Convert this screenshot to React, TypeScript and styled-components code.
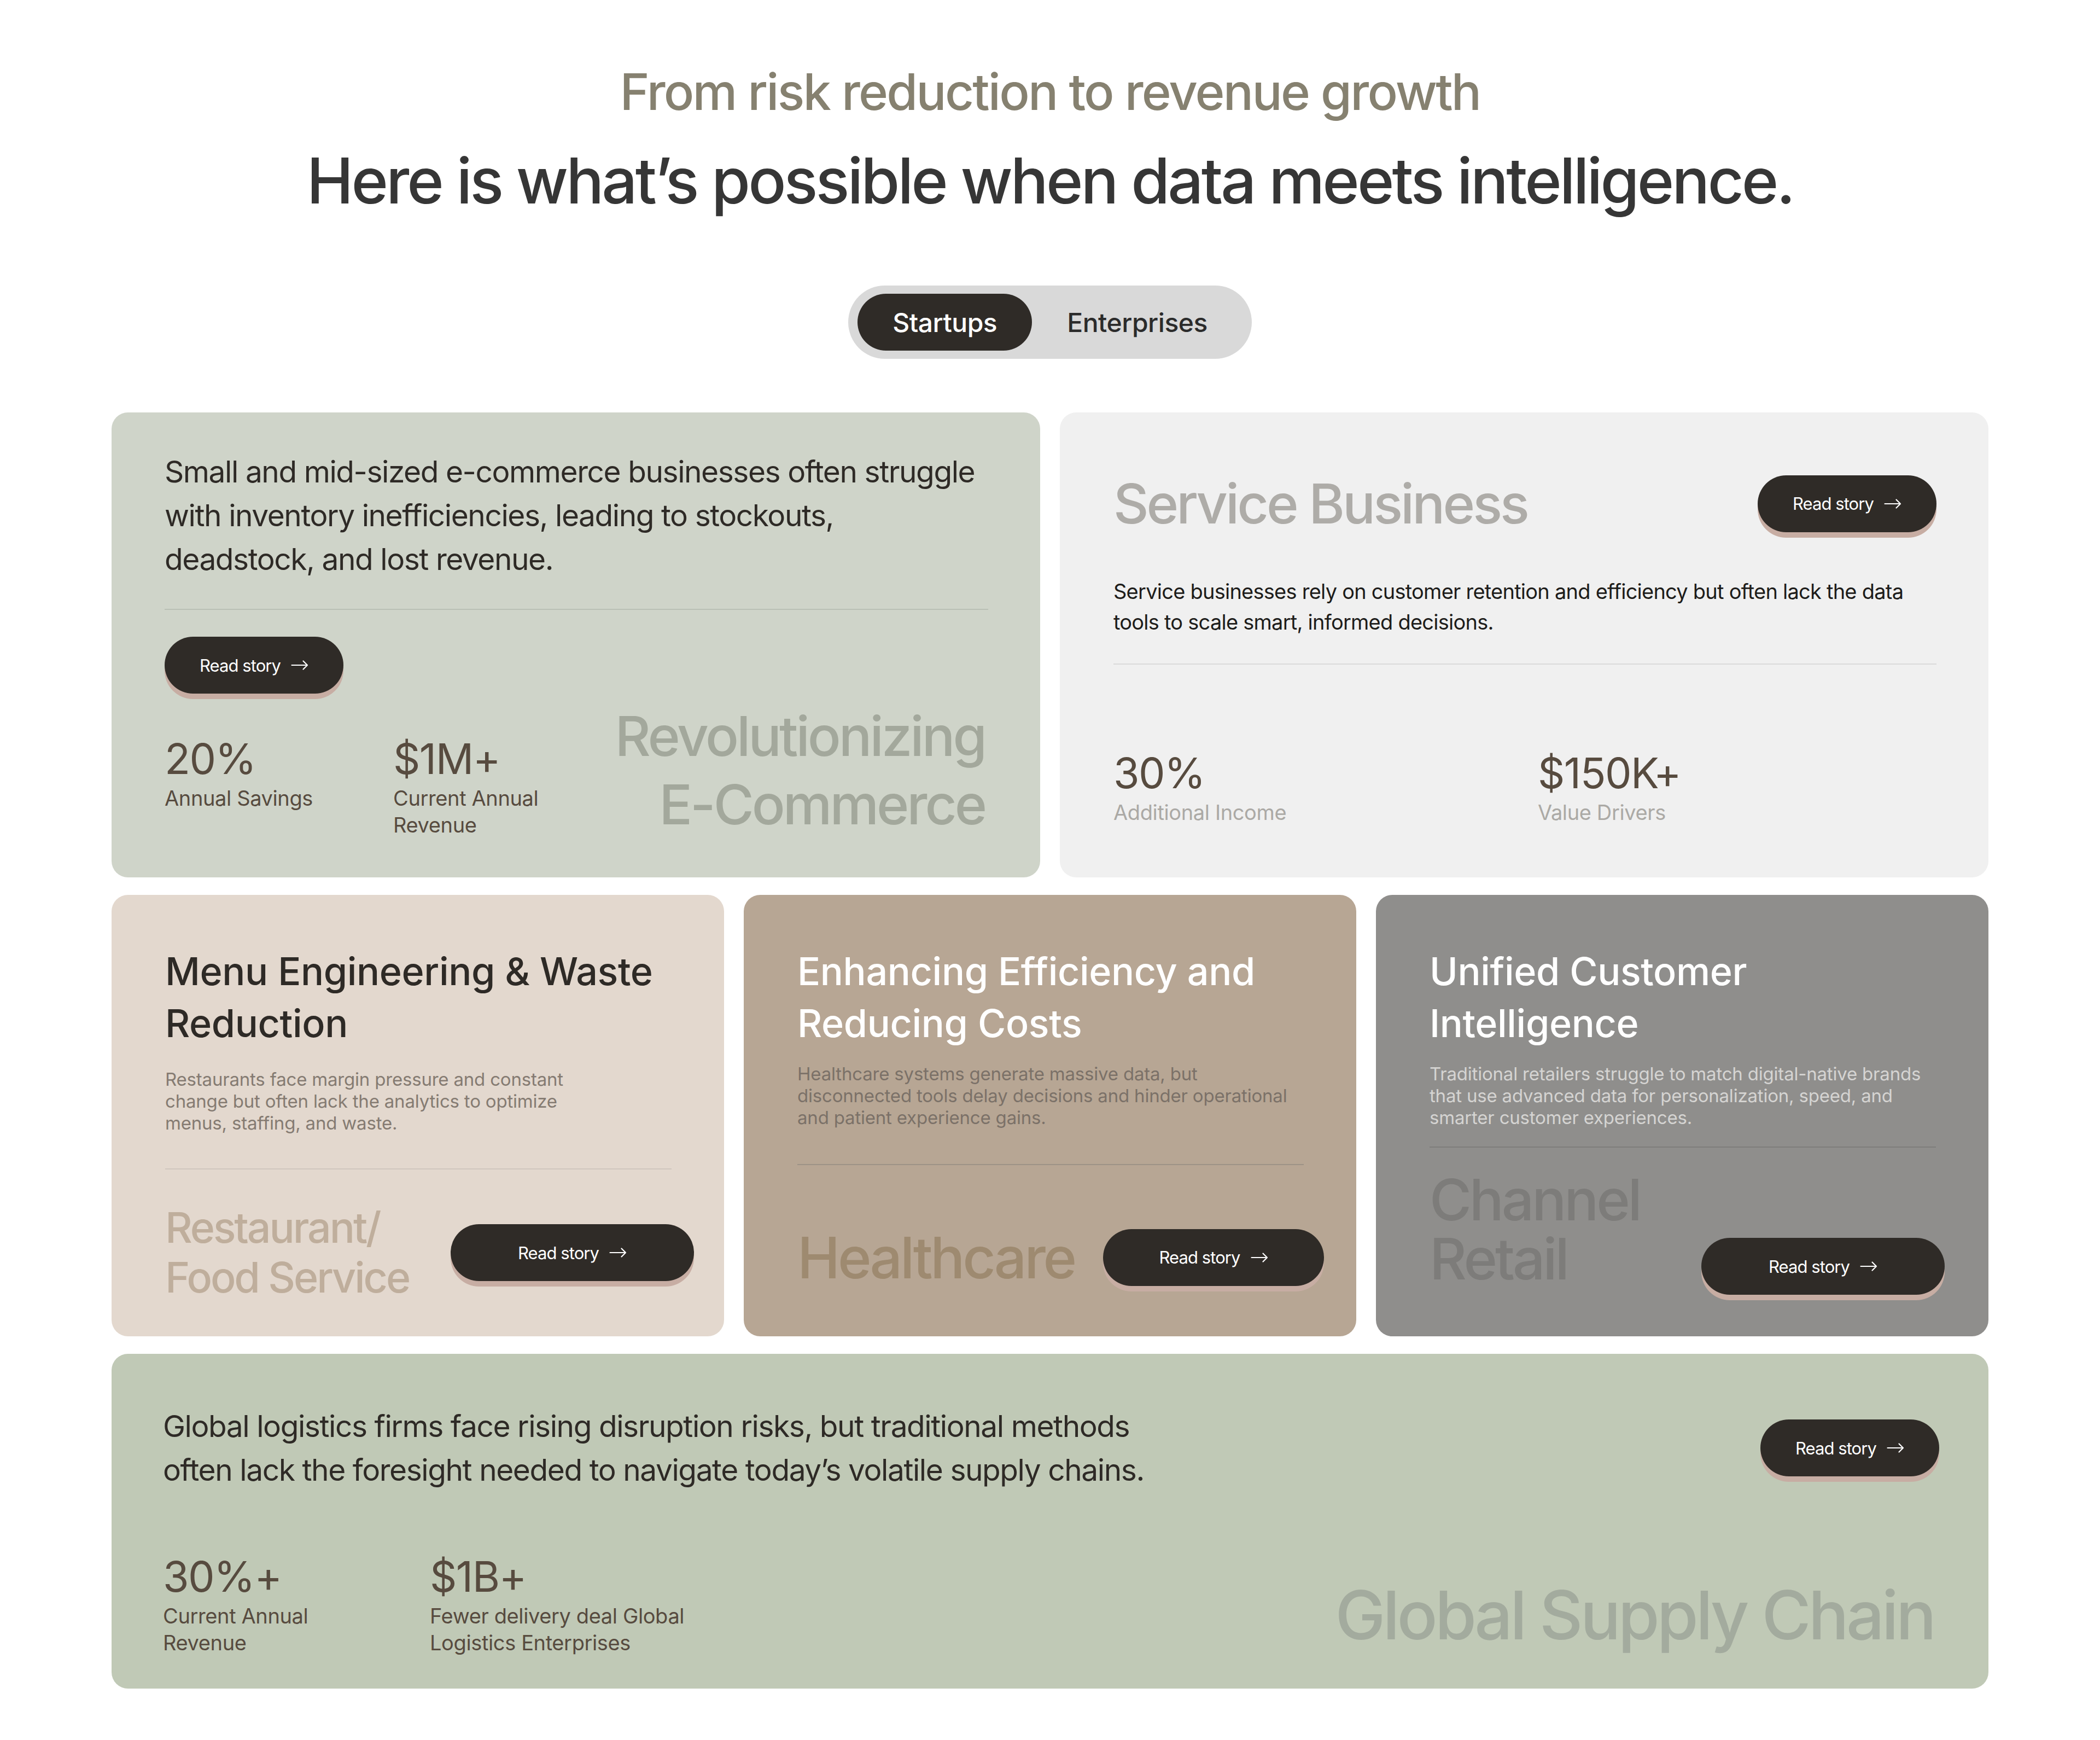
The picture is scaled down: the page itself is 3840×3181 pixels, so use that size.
import React from "react";
import styled, { createGlobalStyle } from "styled-components";

const GlobalStyle = createGlobalStyle`
  html, body { margin: 0; padding: 0; background: #ffffff; }
  body {
    font-family: Inter, "Noto Sans", "Liberation Sans", sans-serif;
    -webkit-font-smoothing: antialiased;
  }
  * { box-sizing: border-box; }
`;

const Page = styled.main`
  width: 3840px;
  padding: 113px 0 95px;
  display: flex;
  flex-direction: column;
  align-items: center;
`;

const Header = styled.header`
  display: flex;
  flex-direction: column;
  align-items: center;
  text-align: center;
`;

const Eyebrow = styled.h2`
  margin: 0;
  font-size: 92px;
  line-height: 110px;
  font-weight: 500;
  letter-spacing: -0.03em;
  color: #868170;
`;

const Headline = styled.h1`
  margin: 38px 0 0;
  font-size: 115px;
  line-height: 140px;
  font-weight: 500;
  letter-spacing: -0.035em;
  color: #363636;
`;

const TabBar = styled.div`
  margin-top: 121px;
  display: inline-flex;
  padding: 15px 17px;
  background: #d9d9d9;
  border-radius: 999px;
`;

const Tab = styled.button<{ $active?: boolean }>`
  height: 104px;
  padding: 0 64px;
  border: 0;
  border-radius: 52px;
  font-family: inherit;
  font-size: 48px;
  font-weight: 500;
  letter-spacing: -0.01em;
  background: ${(p) => (p.$active ? "#2f2b27" : "transparent")};
  color: ${(p) => (p.$active ? "#ffffff" : "#2b2b2b")};
  cursor: pointer;
`;

const Board = styled.section`
  margin-top: 98px;
  width: 3432px;
  display: flex;
  flex-direction: column;
  gap: 32px;
`;

const Row = styled.div<{ $cols: number }>`
  display: grid;
  grid-template-columns: repeat(${(p) => p.$cols}, minmax(0, 1fr));
  column-gap: 36px;
`;

const Card = styled.article<{ $bg: string; $pad: string }>`
  background: ${(p) => p.$bg};
  border-radius: 30px;
  padding: ${(p) => p.$pad};
  display: flex;
  flex-direction: column;
  min-width: 0;
`;

const Lead = styled.p`
  margin: 0;
  font-size: 55px;
  line-height: 80px;
  font-weight: 400;
  letter-spacing: -0.026em;
  color: #2e2a26;
  white-space: nowrap;
`;

const Body = styled.p<{ $size: number; $lh: number; $color: string; $mt: number; $ls?: number }>`
  margin: ${(p) => p.$mt}px 0 0;
  font-size: ${(p) => p.$size}px;
  line-height: ${(p) => p.$lh}px;
  color: ${(p) => p.$color};
  letter-spacing: ${(p) => p.$ls ?? -0.012}em;
  white-space: nowrap;
`;

const CardTitle = styled.h3<{ $color: string }>`
  margin: 0;
  font-size: 70px;
  line-height: 95px;
  font-weight: 500;
  letter-spacing: -0.005em;
  color: ${(p) => p.$color};
  white-space: nowrap;
`;

const DisplayTitle = styled.h3<{ $color: string }>`
  margin: 0;
  font-size: 100px;
  line-height: 127px;
  font-weight: 500;
  letter-spacing: -0.04em;
  color: ${(p) => p.$color};
  white-space: nowrap;
`;

const Rule = styled.hr<{ $color: string; $mt: number }>`
  border: 0;
  height: 2px;
  width: 100%;
  margin: ${(p) => p.$mt}px 0 0;
  background: ${(p) => p.$color};
  flex-shrink: 0;
`;

const SplitRow = styled.div<{ $mt?: number | "auto"; $align?: string; $bleed?: number }>`
  display: flex;
  justify-content: space-between;
  align-items: ${(p) => p.$align || "center"};
  margin-top: ${(p) => (p.$mt === "auto" ? "auto" : `${p.$mt || 0}px`)};
  margin-right: ${(p) => -(p.$bleed || 0)}px;
`;

const ButtonSlot = styled.div<{ $mt: number }>`
  display: flex;
  margin-top: ${(p) => p.$mt}px;
`;

const StoryButton = styled.a<{ $w?: number; $drop?: number }>`
  display: inline-flex;
  align-items: center;
  justify-content: center;
  gap: 19px;
  flex-shrink: 0;
  height: 104px;
  width: ${(p) => (p.$w ? `${p.$w}px` : "auto")};
  padding: 0 64px;
  margin-bottom: ${(p) => -(p.$drop || 0)}px;
  border-radius: 52px;
  background: #2f2b27;
  color: #ffffff;
  box-shadow: 0 10px 0 #c7ada3;
  font-size: 31px;
  line-height: 1;
  letter-spacing: -0.03em;
  text-decoration: none;
  white-space: nowrap;
  cursor: pointer;
`;

const StatGrid = styled.div<{ $cols: string; $push?: boolean }>`
  display: grid;
  grid-template-columns: ${(p) => p.$cols};
  align-items: start;
  margin-top: ${(p) => (p.$push ? "auto" : "0")};
`;

const StatValue = styled.div`
  font-size: 77px;
  line-height: 96px;
  font-weight: 400;
  letter-spacing: -0.02em;
  color: #574b3f;
`;

const StatLabel = styled.div<{ $color: string }>`
  font-size: 38px;
  line-height: 49px;
  letter-spacing: -0.01em;
  color: ${(p) => p.$color};
  white-space: nowrap;
`;

const Watermark = styled.div<{ $size: number; $lh: number; $color: string; $right?: boolean; $mr?: number }>`
  font-size: ${(p) => p.$size}px;
  line-height: ${(p) => p.$lh}px;
  font-weight: 500;
  letter-spacing: -0.04em;
  color: ${(p) => p.$color};
  text-align: ${(p) => (p.$right ? "right" : "left")};
  margin-right: ${(p) => p.$mr || 0}px;
  white-space: nowrap;
`;

const Arrow = () => (
  <svg
    width="32"
    height="18"
    viewBox="0 0 32 18"
    fill="none"
    stroke="currentColor"
    strokeWidth="2.2"
    strokeLinecap="round"
    strokeLinejoin="round"
  >
    <path d="M1.5 9H30M22.5 1.5L30 9L22.5 16.5" />
  </svg>
);

const ReadStory = ({ w, drop }: { w?: number; drop?: number }) => (
  <StoryButton $w={w} $drop={drop}>
    Read story
    <Arrow />
  </StoryButton>
);

const Lines = ({ lines }: { lines: string[] }) => (
  <>
    {lines.map((l, i) => (
      <React.Fragment key={i}>
        {i > 0 && <br />}
        {l}
      </React.Fragment>
    ))}
  </>
);

type Stat = { value: string; label: string[] };

const Stats = ({ stats, cols, labelColor, push }: { stats: Stat[]; cols: string; labelColor: string; push?: boolean }) => (
  <StatGrid $cols={cols} $push={push}>
    {stats.map((s) => (
      <div key={s.value}>
        <StatValue>{s.value}</StatValue>
        <StatLabel $color={labelColor}>
          <Lines lines={s.label} />
        </StatLabel>
      </div>
    ))}
  </StatGrid>
);

type Industry = {
  bg: string;
  titleColor: string;
  descColor: string;
  ruleColor: string;
  markColor: string;
  title: string[];
  desc: string[];
  mark: string[];
  markSize: number;
  markLh: number;
  descGap: number;
  ruleGap: number;
  rowGap: number;
  pb: number;
  btnW: number;
  bleed: number;
  align: string;
  drop?: number;
};

const industries: Industry[] = [
  {
    bg: "#e3d8ce",
    titleColor: "#2e2a26",
    descColor: "#857b72",
    ruleColor: "#d0c6be",
    markColor: "#bfae9c",
    title: ["Menu Engineering & Waste", "Reduction"],
    desc: [
      "Restaurants face margin pressure and constant",
      "change but often lack the analytics to optimize",
      "menus, staffing, and waste.",
    ],
    mark: ["Restaurant/", "Food Service"],
    markSize: 77,
    markLh: 91,
    descGap: 35,
    ruleGap: 63,
    rowGap: 61,
    pb: 61,
    btnW: 445,
    bleed: 41,
    align: "center",
  },
  {
    bg: "#b7a694",
    titleColor: "#ffffff",
    descColor: "#7b7168",
    ruleColor: "#9d9286",
    markColor: "#9e8a70",
    title: ["Enhancing Efficiency and", "Reducing Costs"],
    desc: [
      "Healthcare systems generate massive data, but",
      "disconnected tools delay decisions and hinder operational",
      "and patient experience gains.",
    ],
    mark: ["Healthcare"],
    markSize: 105,
    markLh: 115,
    descGap: 25,
    ruleGap: 65,
    rowGap: 111,
    pb: 87,
    btnW: 404,
    bleed: 37,
    align: "center",
  },
  {
    bg: "#8f8e8c",
    titleColor: "#ffffff",
    descColor: "#d5d4d2",
    ruleColor: "#7f7e7c",
    markColor: "#7d7c7a",
    title: ["Unified Customer", "Intelligence"],
    desc: [
      "Traditional retailers struggle to match digital-native brands",
      "that use advanced data for personalization, speed, and",
      "smarter customer experiences.",
    ],
    mark: ["Channel", "Retail"],
    markSize: 105,
    markLh: 108,
    descGap: 25,
    ruleGap: 33,
    rowGap: 41,
    pb: 88,
    btnW: 445,
    bleed: 16,
    align: "flex-end",
    drop: 12,
  },
];

const IndustryCard = ({ d }: { d: Industry }) => (
  <Card $bg={d.bg} $pad={`92px 96px ${d.pb}px 98px`}>
    <CardTitle $color={d.titleColor}>
      <Lines lines={d.title} />
    </CardTitle>
    <Body $size={33} $lh={40} $color={d.descColor} $mt={d.descGap} $ls={-0.006}>
      <Lines lines={d.desc} />
    </Body>
    <Rule $color={d.ruleColor} $mt={d.ruleGap} />
    <SplitRow $mt={d.rowGap} $align={d.align} $bleed={d.bleed}>
      <Watermark $size={d.markSize} $lh={d.markLh} $color={d.markColor}>
        <Lines lines={d.mark} />
      </Watermark>
      <ReadStory w={d.btnW} drop={d.drop} />
    </SplitRow>
  </Card>
);

export default function App() {
  return (
    <>
      <GlobalStyle />
      <Page>
        <Header>
          <Eyebrow>From risk reduction to revenue growth</Eyebrow>
          <Headline>Here is what’s possible when data meets intelligence.</Headline>
        </Header>

        <TabBar>
          <Tab $active>Startups</Tab>
          <Tab>Enterprises</Tab>
        </TabBar>

        <Board>
          <Row $cols={2}>
            <Card $bg="#cfd4c9" $pad="68px 95px 71px 97px">
              <Lead>
                <Lines
                  lines={[
                    "Small and mid-sized e-commerce businesses often struggle",
                    "with inventory inefficiencies, leading to stockouts,",
                    "deadstock, and lost revenue.",
                  ]}
                />
              </Lead>
              <Rule $color="#bac0b5" $mt={51} />
              <ButtonSlot $mt={49}>
                <ReadStory />
              </ButtonSlot>
              <SplitRow $mt={15} $align="flex-end">
                <Stats
                  cols="418px auto"
                  labelColor="#574b3f"
                  stats={[
                    { value: "20%", label: ["Annual Savings"] },
                    { value: "$1M+", label: ["Current Annual", "Revenue"] },
                  ]}
                />
                <Watermark $size={101} $lh={125} $color="#a3a89c" $right $mr={6}>
                  Revolutionizing
                  <br />
                  E-Commerce
                </Watermark>
              </SplitRow>
            </Card>

            <Card $bg="#f0f0f0" $pad="103px 95px 94px 98px">
              <SplitRow $align="center">
                <DisplayTitle $color="#aeaca8">Service Business</DisplayTitle>
                <ReadStory />
              </SplitRow>
              <Body $size={38} $lh={56} $color="#1d1c1a" $mt={69} $ls={-0.02}>
                Service businesses rely on customer retention and efficiency but often lack the data
                <br />
                tools to scale smart, informed decisions.
              </Body>
              <Rule $color="#dadada" $mt={48} />
              <Stats
                push
                cols="776px 1fr"
                labelColor="#aba9a5"
                stats={[
                  { value: "30%", label: ["Additional Income"] },
                  { value: "$150K+", label: ["Value Drivers"] },
                ]}
              />
            </Card>
          </Row>

          <Row $cols={3}>
            {industries.map((d) => (
              <IndustryCard key={d.mark.join(" ")} d={d} />
            ))}
          </Row>

          <Card $bg="#c0c9b6" $pad="92px 90px 59px 94px">
            <SplitRow $align="center">
              <Lead>
                Global logistics firms face rising disruption risks, but traditional methods
                <br />
                often lack the foresight needed to navigate today’s volatile supply chains.
              </Lead>
              <ReadStory />
            </SplitRow>
            <SplitRow $mt={107} $align="flex-end">
              <Stats
                cols="488px auto"
                labelColor="#574b3f"
                stats={[
                  { value: "30%+", label: ["Current Annual", "Revenue"] },
                  { value: "$1B+", label: ["Fewer delivery deal Global", "Logistics Enterprises"] },
                ]}
              />
              <Watermark $size={123} $lh={150} $color="#a3ab9e" $right $mr={10}>
                Global Supply Chain
              </Watermark>
            </SplitRow>
          </Card>
        </Board>
      </Page>
    </>
  );
}
